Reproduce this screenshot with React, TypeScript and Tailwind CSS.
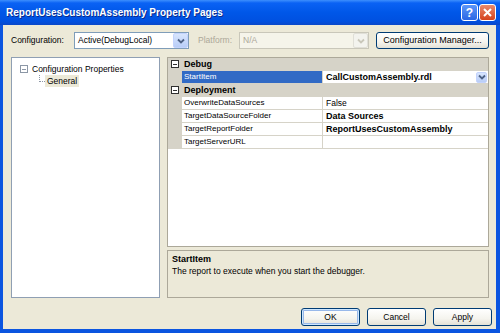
import React from "react";

function Chevron({ color = "#4d6185" }: { color?: string }) {
  return (
    <svg width="8" height="6" viewBox="0 0 8 6">
      <path d="M1 1.5 L4 4.5 L7 1.5" fill="none" stroke={color} strokeWidth="1.8" />
    </svg>
  );
}

function Combo({ text, disabled, w }: { text: string; disabled?: boolean; w: string }) {
  return (
    <div
      className={`${w} h-[17px] flex items-center border ${
        disabled ? "border-[#c9c7ba] bg-[#f5f4ea]" : "border-[#7f9db9] bg-white"
      }`}
    >
      <div className={`flex-1 pl-[3px] ${disabled ? "text-[#aca899]" : "text-black"}`}>{text}</div>
      <div
        className={`w-[15px] h-[15px] mr-[0px] flex items-center justify-center rounded-[2px] ${
          disabled
            ? "bg-[#f3f3ee] border border-[#e0dfd7]"
            : "bg-[linear-gradient(to_bottom,#d8e5fd,#b8cdf7)] border border-[#c3d3fd]"
        }`}
      >
        <Chevron color={disabled ? "#c9c7ba" : "#4d6185"} />
      </div>
    </div>
  );
}

function XPButton({ label, w, def }: { label: string; w: string; def?: boolean }) {
  return (
    <div
      className={`${w} h-[18px] flex items-center justify-center rounded-[3px] border border-[#003c74] bg-[linear-gradient(to_bottom,#ffffff,#f5f4ee_60%,#e3e1d6)] text-black ${
        def ? "shadow-[inset_0_0_0_1px_#cee7ff,inset_0_0_0_2px_#98b8ea]" : ""
      }`}
    >
      {label}
    </div>
  );
}

function MinusBox({ color = "#404040" }: { color?: string }) {
  return (
    <div
      className="w-[8px] h-[8px] border bg-white flex items-center justify-center"
      style={{ borderColor: color }}
    >
      <div className="w-[4px] h-[1px]" style={{ background: color }} />
    </div>
  );
}

function CategoryRow({ label }: { label: string }) {
  return (
    <div className="h-[13px] flex items-center bg-[#d6d3c8] border-b border-[#d6d3c8]">
      <div className="w-[14px] flex items-center justify-center">
        <MinusBox color="#303030" />
      </div>
      <div className="pl-[2px] font-bold text-[9px] text-black">{label}</div>
    </div>
  );
}

function PropRow({
  name,
  value,
  bold,
  selected,
}: {
  name: string;
  value?: string;
  bold?: boolean;
  selected?: boolean;
}) {
  return (
    <div className="h-[13px] flex border-b border-[#d6d3c8]">
      <div className="w-[14px] bg-[#d6d3c8]" />
      <div
        className={`w-[141px] pl-[2px] flex items-center border-r border-[#d6d3c8] text-[8px] ${
          selected ? "bg-[#316ac5] text-white" : "bg-white text-black"
        }`}
      >
        {name}
      </div>
      <div className="flex-1 flex items-center bg-white pl-[3px]">
        <div className={`flex-1 ${bold ? "font-bold text-[9px]" : ""} text-black`}>{value}</div>
        {selected && (
          <div className="w-[11px] h-[11px] mr-[1px] flex items-center justify-center rounded-[2px] bg-[linear-gradient(to_bottom,#d8e5fd,#b8cdf7)] border border-[#c3d3fd]">
            <Chevron />
          </div>
        )}
      </div>
    </div>
  );
}

export default function App() {
  return (
    <div className="w-[500px] h-[333px] flex flex-col bg-[#0b55e0] overflow-hidden font-['Liberation_Sans',Arial,sans-serif] text-[8.5px] leading-none">
      {/* Title bar */}
      <div className="h-[25px] flex items-center bg-[linear-gradient(to_bottom,#3d8ffd_0%,#0a62f4_12%,#0057e8_50%,#0050e0_85%,#0a47c8_100%)]">
        <div className="pl-[6px] flex-1 text-white font-bold text-[10px] [text-shadow:1px_1px_0_#0a2a8a]">
          ReportUsesCustomAssembly Property Pages
        </div>
        <div className="flex gap-[1px] pr-[4px]">
          <div className="w-[17px] h-[17px] rounded-[3px] border border-white bg-[linear-gradient(to_bottom,#5c97f9,#2a66e4)] flex items-center justify-center text-white font-bold text-[12px]">
            ?
          </div>
          <div className="w-[17px] h-[17px] rounded-[3px] border border-white bg-[linear-gradient(to_bottom,#e98b6e,#d5421c)] flex items-center justify-center">
            <svg width="9" height="9" viewBox="0 0 9 9">
              <path d="M1 1 L8 8 M8 1 L1 8" stroke="white" strokeWidth="2" />
            </svg>
          </div>
        </div>
      </div>

      {/* Body */}
      <div className="flex-1 ml-[3px] mr-[4px] mb-[4px] bg-[#ece9d8] flex flex-col">
        {/* Configuration row */}
        <div className="mt-[7px] h-[17px] flex items-center pl-[8px]">
          <div className="w-[63px] text-black">Configuration:</div>
          <Combo text="Active(DebugLocal)" w="w-[115px]" />
          <div className="ml-[9px] w-[41px] text-[#aca899]">Platform:</div>
          <Combo text="N/A" disabled w="w-[130px]" />
          <div className="ml-[7px] w-[113px] h-[17px] flex items-center justify-center rounded-[3px] border border-[#003c74] bg-[linear-gradient(to_bottom,#ffffff,#f5f4ee_60%,#e3e1d6)] text-black text-[9px]">
            Configuration Manager...
          </div>
        </div>

        {/* Panels */}
        <div className="mt-[8px] flex pl-[8px]">
          {/* Tree */}
          <div className="w-[149px] h-[241px] border border-[#8f9fb3] bg-white pt-[5px] pl-[8px]">
            <div className="h-[12px] flex items-center">
              <MinusBox color="#8c97a6" />
              <div className="ml-[4px] text-black">Configuration Properties</div>
            </div>
            <div className="flex items-start pl-[19px]">
              <div className="w-[6px] h-[7px] border-l border-b border-dotted border-[#8c97a6]" />
              <div className="h-[12px] px-[2px] flex items-center bg-[#ece9d8] text-black">General</div>
            </div>
          </div>

          {/* Right column */}
          <div className="ml-[7px] w-[322px] flex flex-col">
            <div className="h-[190px] border border-[#aca899] bg-white flex flex-col">
              <CategoryRow label="Debug" />
              <PropRow name="StartItem" value="CallCustomAssembly.rdl" bold selected />
              <CategoryRow label="Deployment" />
              <PropRow name="OverwriteDataSources" value="False" />
              <PropRow name="TargetDataSourceFolder" value="Data Sources" bold />
              <PropRow name="TargetReportFolder" value="ReportUsesCustomAssembly" bold />
              <PropRow name="TargetServerURL" value="" />
            </div>
            <div className="mt-[3px] h-[48px] border border-[#aca899] bg-[#ece9d8] pl-[4px] pt-[4px] text-black">
              <div className="font-bold text-[9px]">StartItem</div>
              <div className="mt-[3px]">The report to execute when you start the debugger.</div>
            </div>
          </div>
        </div>

        {/* Buttons */}
        <div className="mt-[10px] flex justify-end pr-[4px] gap-[7px]">
          <XPButton label="OK" w="w-[59px]" def />
          <XPButton label="Cancel" w="w-[59px]" />
          <XPButton label="Apply" w="w-[59px]" />
        </div>
      </div>
    </div>
  );
}
